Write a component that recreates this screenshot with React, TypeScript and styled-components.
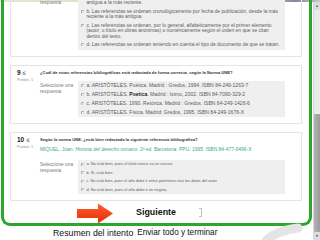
import styled, { createGlobalStyle } from "styled-components";

const GlobalStyle = createGlobalStyle`
  html, body {
    margin: 0;
    padding: 0;
    background: #fff;
  }
  body {
    font-family: "Liberation Sans", Arial, sans-serif;
  }
`;

const Screen = styled.div`
  position: relative;
  width: 320px;
  height: 240px;
  overflow: hidden;
  display: flex;
  flex-direction: column;
  background: #fff;
`;

const TopStrip = styled.div`
  height: 2px;
  flex: none;
  background: linear-gradient(90deg, #e8e2d4 0%, #e4ddcc 80%, #7e889c 92%, #c9c9c9 100%);
`;

const Body = styled.div`
  flex: 1;
  display: flex;
  min-height: 0;
`;

const Viewport = styled.div`
  flex: 1;
  min-width: 0;
  padding-left: 1px;
  display: flex;
  flex-direction: column;
`;

const Frame = styled.div`
  flex: none;
  margin: -26px 1px 0 0;
  border: 3px solid #2ea62e;
  border-top: none;
  border-radius: 0 0 9px 9px;
  padding: 0 7px 0 6px;
`;

const Questions = styled.div`
  display: flex;
  flex-direction: column;
  gap: 8px;
`;

const Card = styled.div`
  border: 1px solid #e4e4e4;
  padding: 4px 0 6px 6px;
  display: grid;
  grid-template-columns: 23px 1fr;
  align-items: start;
`;

const Info = styled.div`
  display: flex;
  flex-direction: column;
  gap: 2px;
`;

const QNum = styled.div`
  display: flex;
  align-items: center;
  gap: 1.5px;
  height: 6px;
  font-size: 6.5px;
  line-height: 6px;
  font-weight: bold;
  color: #222;
`;

const Points = styled.div`
  font-size: 3.8px;
  line-height: 5px;
  color: #8a8a8a;
  white-space: nowrap;
`;

const Content = styled.div`
  min-width: 0;
  display: flex;
  flex-direction: column;
`;

const QuestionText = styled.div`
  height: 5px;
  font-size: 4.15px;
  line-height: 5px;
  font-weight: bold;
  color: #333;
  white-space: nowrap;
`;

const Reference = styled.div`
  height: 5px;
  margin-top: 5px;
  font-size: 4.95px;
  line-height: 5px;
  color: #3fa58c;
  white-space: nowrap;

  em {
    font-style: italic;
  }
`;

const AnswerRow = styled.div<{ $gap: number }>`
  margin-top: ${(p) => p.$gap}px;
  display: grid;
  grid-template-columns: 38px 207px;
  align-items: start;
`;

const Prompt = styled.div`
  padding-top: 2px;
  font-size: 4.85px;
  line-height: 6px;
  color: #7a7a7a;
  white-space: nowrap;
`;

type Variant = "long" | "normal" | "dense";

const sizes: Record<Variant, { fs: number; lh: number; pad: number; box: number }> = {
  long: { fs: 4.92, lh: 5.5, pad: 1.5, box: 1 },
  normal: { fs: 5.05, lh: 5, pad: 2, box: 0 },
  dense: { fs: 3.9, lh: 4.5, pad: 2, box: 0 },
};

const Options = styled.div<{ $v: Variant }>`
  background: #efefef;
  padding: ${(p) => sizes[p.$v].box}px 0;
`;

const Option = styled.div<{ $v: Variant }>`
  display: flex;
  align-items: flex-start;
  gap: 2px;
  padding: ${(p) => sizes[p.$v].pad}px 0 ${(p) => sizes[p.$v].pad}px 3px;
  font-size: ${(p) => sizes[p.$v].fs}px;
  line-height: ${(p) => sizes[p.$v].lh}px;
  color: #5c5c5c;
  white-space: nowrap;

  b {
    color: #222;
  }
`;

const Radio = styled.span<{ $v: Variant }>`
  flex: none;
  width: 3.4px;
  height: 3.4px;
  margin-top: ${(p) => (sizes[p.$v].lh - 3.4) / 2}px;
  border-radius: 50%;
  background: #fff;
  box-shadow: inset 0.5px 0.5px 0 0.3px #8c8c8c, inset -0.3px -0.3px 0 0.3px #d4d4d4;
`;

const Lines = styled.div`
  display: flex;
  flex-direction: column;
`;

const Line = styled.span<{ $v: Variant }>`
  height: ${(p) => sizes[p.$v].lh}px;
`;

const Nav = styled.div`
  position: relative;
  height: 22px;
  display: flex;
  align-items: center;
  justify-content: center;
`;

const NextButton = styled.span`
  font-size: 8.9px;
  line-height: 10px;
  font-weight: bold;
  color: #111;
`;

const Caret = styled.span`
  position: absolute;
  left: 189px;
  top: 7px;
  width: 1.5px;
  height: 7px;
  border: 0.5px solid #b9c9b0;
  border-left: none;
`;

const Footer = styled.div`
  display: flex;
  align-items: center;
  gap: 4px;
  height: 10px;
  padding: 2px 0 0 52px;
`;

const FooterLink = styled.span<{ $size: number }>`
  font-size: ${(p) => p.$size}px;
  line-height: 10px;
  color: #111;
  white-space: nowrap;
`;

const Scrollbar = styled.div`
  width: 6px;
  flex: none;
  display: flex;
  flex-direction: column;
  background: #ebebeb;
  border-left: 1px solid #d6d6d6;
`;

const ScrollArrow = styled.div<{ $down?: boolean }>`
  height: 8px;
  flex: none;
  display: flex;
  align-items: center;
  justify-content: center;
  background: #dcdcdc;

  &::after {
    content: "";
    border-left: 1.5px solid transparent;
    border-right: 1.5px solid transparent;
    ${(p) => (p.$down ? "border-top: 2px solid #444;" : "border-bottom: 2px solid #444;")}
  }
`;

const Track = styled.div`
  flex: 1;
  display: flex;
  flex-direction: column;
  justify-content: flex-end;
`;

const Thumb = styled.div`
  height: 118px;
  background: linear-gradient(90deg, #b4b4b4, #9a9a9a);
  border-radius: 1px;
`;

const Arrow = styled.svg`
  position: absolute;
  left: 76px;
  top: 203px;
`;

const Watermark = styled.svg`
  position: absolute;
  left: 250px;
  top: 222px;
`;

function QIcon() {
  return (
    <svg width="4" height="4" viewBox="0 0 4 4">
      <path d="M3.5 0.6 L0.6 1.8 L3.5 3" fill="none" stroke="#555" strokeWidth="0.6" />
      <path d="M0.6 3.6 H3.5" stroke="#555" strokeWidth="0.5" />
    </svg>
  );
}

type Opt = { lines: React.ReactNode[] };

function OptionList({ items, v }: { items: Opt[]; v: Variant }) {
  return (
    <Options $v={v}>
      {items.map((o, i) => (
        <Option key={i} $v={v}>
          <Radio $v={v} />
          <Lines>
            {o.lines.map((l, j) => (
              <Line key={j} $v={v}>
                {l}
              </Line>
            ))}
          </Lines>
        </Option>
      ))}
    </Options>
  );
}

const q8: Opt[] = [
  { lines: ["a. Las referencias se ordenan cronológicamente por fecha de publicación, desde la más", "antigua a la más reciente."] },
  { lines: ["b. Las referencias se ordenan cronológicamente por fecha de publicación, desde la más", "reciente a la más antigua."] },
  {
    lines: [
      "c. Las referencias se ordenan, por lo general, alfabéticamente por el primer elemento",
      "(autor, o título en obras anónimas) o numéricamente según el orden en que se citan",
      "dentro del texto.",
    ],
  },
  { lines: ["d. Las referencias se ordenan teniendo en cuenta el tipo de documento de que se tratan."] },
];

const q9: Opt[] = [
  { lines: ["a. ARISTÓTELES. Poética. Madrid : Gredos, 1994. ISBN 84-249-1263-7"] },
  { lines: [<>b. ARISTÓTELES. <b>Poetica</b>. Madrid : Istmo, 2002. ISBN 84-7090-329-2</>] },
  { lines: ["c. ARISTÓTELES. 1990. Retórica. Madrid : Gredos. ISBN 84-249-1426-6"] },
  { lines: ["d. ARISTÓTELES. Física. Madrid: Gredos, 1995. ISBN 84-249-1676-X"] },
];

const q10: Opt[] = [
  { lines: ["a. No está bien, pues el título nunca va en cursiva"] },
  { lines: ["b. Sí, está bien"] },
  { lines: ["c. No está bien, pues el año debe ir entre paréntesis tras los datos del autor"] },
  { lines: ["d. No está bien, pues el año debe ir en negrita."] },
];

export default function App() {
  return (
    <>
      <GlobalStyle />
      <Screen>
        <TopStrip />
        <Body>
          <Viewport>
            <Frame>
              <Questions>
                <Card>
                  <Info>
                    <QNum>
                      8 <QIcon />
                    </QNum>
                    <Points>Puntos: 1</Points>
                  </Info>
                  <Content>
                    <QuestionText>¿Cómo se ordenan las referencias en una lista bibliográfica?</QuestionText>
                    <AnswerRow $gap={6}>
                      <Prompt>
                        Seleccione una
                        <br />
                        respuesta
                      </Prompt>
                      <OptionList items={q8} v="long" />
                    </AnswerRow>
                  </Content>
                </Card>

                <Card>
                  <Info>
                    <QNum>
                      9 <QIcon />
                    </QNum>
                    <Points>Puntos: 1</Points>
                  </Info>
                  <Content>
                    <QuestionText>
                      ¿Cuál de estas referencias bibliográficas está redactada de forma correcta, según la Norma UNE?
                    </QuestionText>
                    <AnswerRow $gap={6}>
                      <Prompt>
                        Seleccione una
                        <br />
                        respuesta
                      </Prompt>
                      <OptionList items={q9} v="normal" />
                    </AnswerRow>
                  </Content>
                </Card>

                <Card>
                  <Info>
                    <QNum>
                      10 <QIcon />
                    </QNum>
                    <Points>Puntos: 1</Points>
                  </Info>
                  <Content>
                    <QuestionText>
                      Según la norma UNE, ¿está bien redactada la siguiente referencia bibliográfica?
                    </QuestionText>
                    <Reference>
                      MIQUEL, Joan. <em>Historia del derecho romano</em>. 2ª ed. Barcelona: PPU, 1995. ISBN 84-477-0496-X
                    </Reference>
                    <AnswerRow $gap={8}>
                      <Prompt>
                        Seleccione una
                        <br />
                        respuesta
                      </Prompt>
                      <OptionList items={q10} v="dense" />
                    </AnswerRow>
                  </Content>
                </Card>
              </Questions>

              <Nav>
                <NextButton>Siguiente</NextButton>
                <Caret />
              </Nav>
            </Frame>
            <Footer>
              <FooterLink $size={8.75}>Resumen del intento</FooterLink>
              <FooterLink $size={8.2}>Enviar todo y terminar</FooterLink>
            </Footer>
          </Viewport>
          <Scrollbar>
            <ScrollArrow />
            <Track>
              <Thumb />
            </Track>
            <ScrollArrow $down />
          </Scrollbar>
        </Body>

        <Arrow width="38" height="21" viewBox="0 0 38 21">
          <defs>
            <linearGradient id="ar" x1="0" y1="0" x2="0" y2="1">
              <stop offset="0" stopColor="#ff5a2a" />
              <stop offset="1" stopColor="#e8300f" />
            </linearGradient>
          </defs>
          <path d="M1 6 H22 V0.5 L37 10.5 L22 20.5 V15 H1 Z" fill="url(#ar)" />
        </Arrow>

        <Watermark width="60" height="20" viewBox="0 0 60 20">
          <path d="M14 22 C20 12 32 8 48 6" fill="none" stroke="#e4e4e4" strokeWidth="9" strokeLinecap="round" />
        </Watermark>
      </Screen>
    </>
  );
}
